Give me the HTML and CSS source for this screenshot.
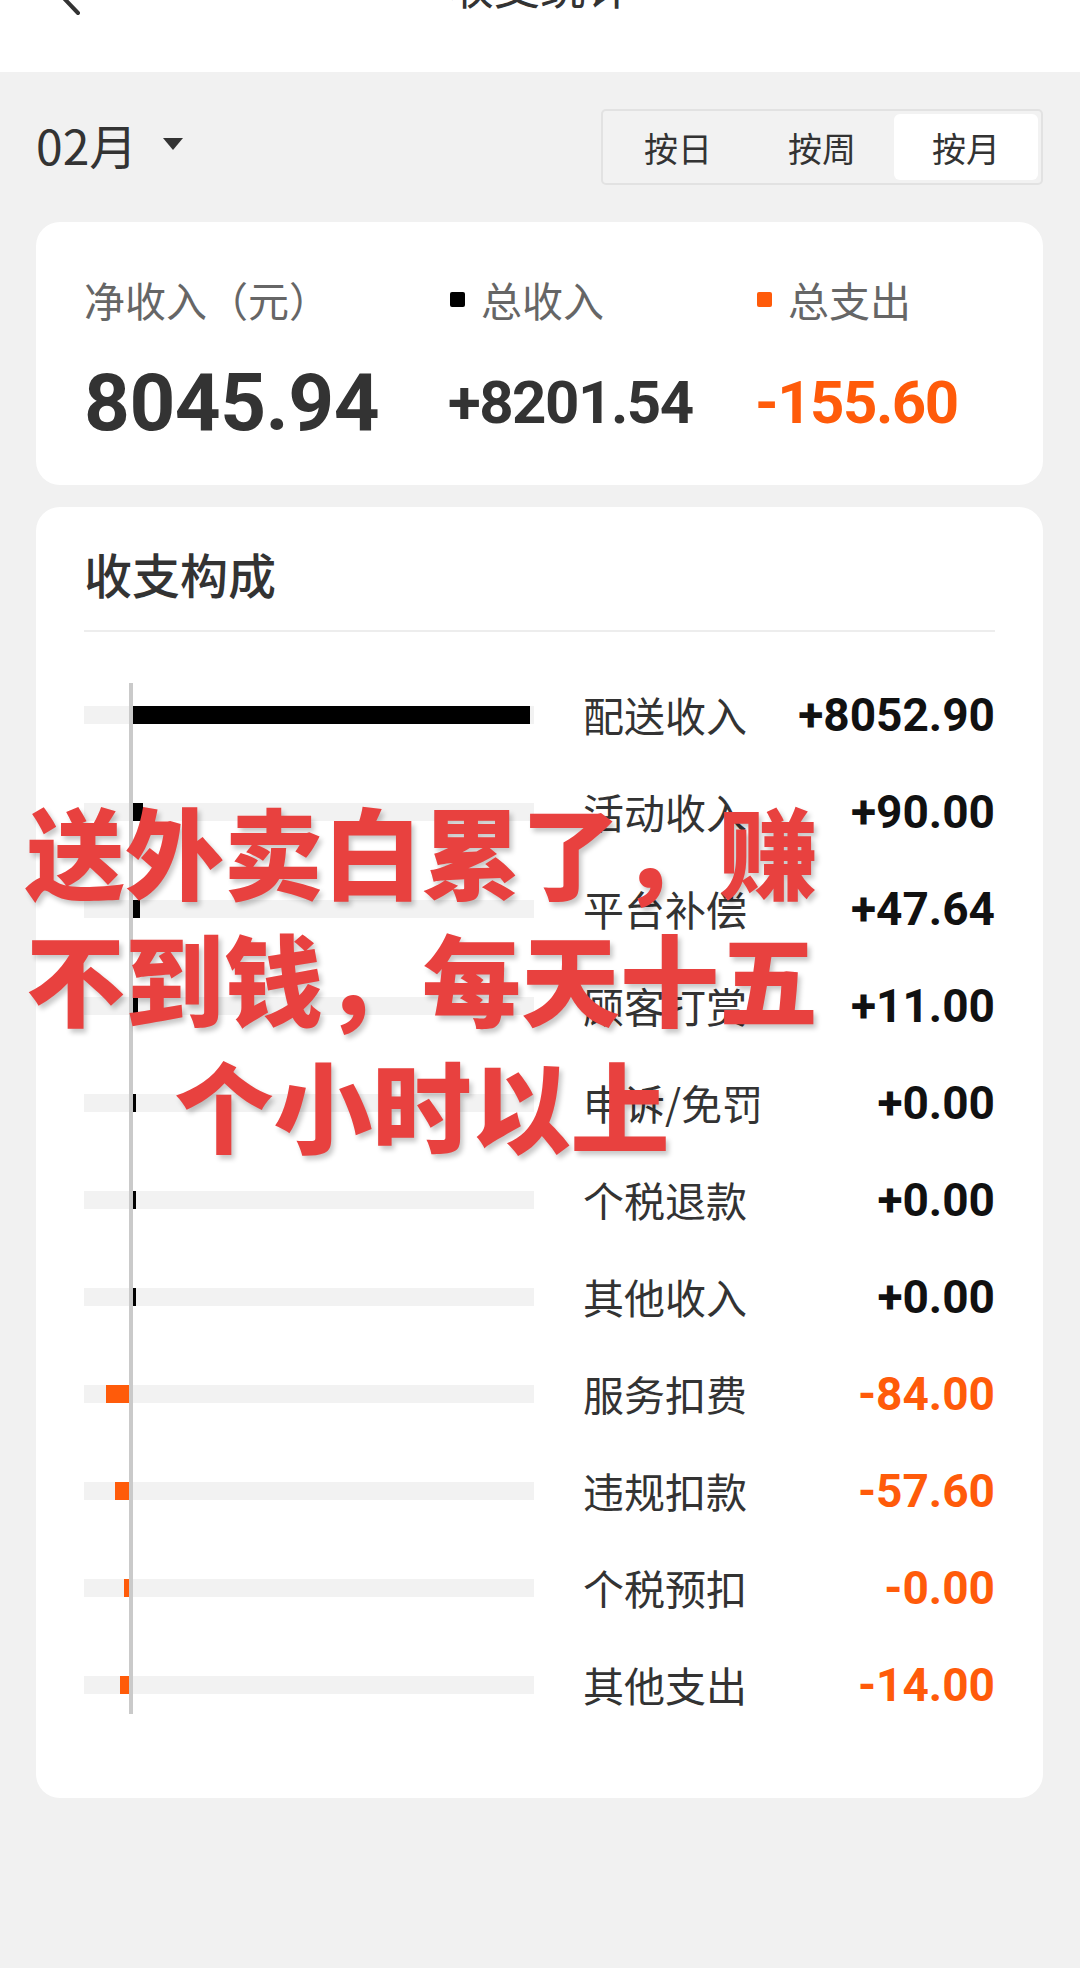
FILE: index.html
```html
<!DOCTYPE html>
<html lang="zh-CN">
<head>
  <meta charset="UTF-8">
  <title>收支统计</title>
  <meta name="viewport" content="width=device-width, initial-scale=1">
  <link rel="stylesheet" href="styles.css">
</head>
<body>
  <div class="page">
    <!-- Top bar (scrolled, title partly out of view) -->
    <header class="topbar">
      <svg class="back" width="120" height="72" viewBox="0 0 120 72">
        <polyline points="82,-34 57,-9 78,13" fill="none" stroke="#333" stroke-width="4" stroke-linecap="round" stroke-linejoin="round"/>
      </svg>
      <div class="topbar-title">收支统计</div>
      <span></span>
    </header>

    <!-- Month picker + period switch -->
    <div class="toolbar">
      <div class="month">02月<span class="caret"></span></div>
      <div class="seg">
        <div class="seg-item">按日</div>
        <div class="seg-item">按周</div>
        <div class="seg-item active">按月</div>
      </div>
    </div>

    <!-- Summary -->
    <section class="card summary">
      <div class="sum-label">净收入（元）</div>
      <div class="sum-label"><i class="dot"></i>总收入</div>
      <div class="sum-label"><i class="dot out"></i>总支出</div>
      <div class="sum-net">8045.94</div>
      <div class="sum-val">+8201.54</div>
      <div class="sum-val out">-155.60</div>
    </section>

    <!-- Breakdown -->
    <section class="card breakdown">
      <h2 class="card-title">收支构成</h2>
      <div class="divider"></div>
      <div class="chart">
        <div class="axis"></div>

        <div class="row">
          <div class="track"><div class="neg"></div><div class="pos"><span class="bar in" style="width:397px"></span></div></div>
          <div class="row-label">配送收入</div>
          <div class="row-value">+8052.90</div>
        </div>
        <div class="row">
          <div class="track"><div class="neg"></div><div class="pos"><span class="bar in" style="width:10px"></span></div></div>
          <div class="row-label">活动收入</div>
          <div class="row-value">+90.00</div>
        </div>
        <div class="row">
          <div class="track"><div class="neg"></div><div class="pos"><span class="bar in" style="width:7px"></span></div></div>
          <div class="row-label">平台补偿</div>
          <div class="row-value">+47.64</div>
        </div>
        <div class="row">
          <div class="track"><div class="neg"></div><div class="pos"><span class="bar in" style="width:5px"></span></div></div>
          <div class="row-label">顾客打赏</div>
          <div class="row-value">+11.00</div>
        </div>
        <div class="row">
          <div class="track"><div class="neg"></div><div class="pos"><span class="bar in" style="width:3px"></span></div></div>
          <div class="row-label">申诉/免罚</div>
          <div class="row-value">+0.00</div>
        </div>
        <div class="row">
          <div class="track"><div class="neg"></div><div class="pos"><span class="bar in" style="width:3px"></span></div></div>
          <div class="row-label">个税退款</div>
          <div class="row-value">+0.00</div>
        </div>
        <div class="row">
          <div class="track"><div class="neg"></div><div class="pos"><span class="bar in" style="width:3px"></span></div></div>
          <div class="row-label">其他收入</div>
          <div class="row-value">+0.00</div>
        </div>
        <div class="row">
          <div class="track"><div class="neg"><span class="bar out" style="width:23px"></span></div><div class="pos"></div></div>
          <div class="row-label">服务扣费</div>
          <div class="row-value out">-84.00</div>
        </div>
        <div class="row">
          <div class="track"><div class="neg"><span class="bar out" style="width:14px"></span></div><div class="pos"></div></div>
          <div class="row-label">违规扣款</div>
          <div class="row-value out">-57.60</div>
        </div>
        <div class="row">
          <div class="track"><div class="neg"><span class="bar out" style="width:5px"></span></div><div class="pos"></div></div>
          <div class="row-label">个税预扣</div>
          <div class="row-value out">-0.00</div>
        </div>
        <div class="row">
          <div class="track"><div class="neg"><span class="bar out" style="width:9px"></span></div><div class="pos"></div></div>
          <div class="row-label">其他支出</div>
          <div class="row-value out">-14.00</div>
        </div>
      </div>
    </section>

    <!-- Caption stamped over the screenshot -->
    <div class="stamp">送外卖白累了，赚<br>不到钱，每天十五<br>个小时以上</div>
  </div>
</body>
</html>
```

FILE: styles.css
```css
/* ====== Page ====== */
* { box-sizing: border-box; }
body {
  margin: 0;
  background: #f1f1f1;
  font-family: "Noto Sans CJK SC", "Noto Sans", sans-serif;
  color: #333;
}
.page {
  position: relative;
  width: 1080px;
  min-height: 1968px;
  background: #f1f1f1;
  overflow: hidden;
}

/* ====== Top bar ====== */
.topbar {
  display: grid;
  grid-template-columns: 120px 1fr 120px;
  height: 72px;
  background: #fff;
}
.back { display: block; overflow: visible; }
.topbar-title {
  margin-top: -39px;
  font-size: 46px;
  line-height: 46px;
  text-align: center;
  color: #333;
}

/* ====== Toolbar ====== */
.toolbar {
  display: flex;
  align-items: center;
  justify-content: space-between;
  padding: 37px 37px 37px 36px;
}
.month {
  display: flex;
  align-items: center;
  margin-top: -6px;
  font-size: 48px;
  line-height: 48px;
  color: #333;
}
.caret {
  width: 0;
  height: 0;
  margin-left: 26px;
  border-left: 10px solid transparent;
  border-right: 10px solid transparent;
  border-top: 12px solid #333;
}
.seg {
  display: flex;
  padding: 3px;
  border: 2px solid #e2e2e2;
  border-radius: 5px;
  background: #f2f2f2;
}
.seg-item {
  width: 144px;
  height: 66px;
  display: flex;
  align-items: center;
  justify-content: center;
  font-size: 34px;
  color: #333;
  border-radius: 6px;
}
.seg-item.active { background: #fff; }

/* ====== Cards ====== */
.card {
  margin: 0 37px 0 36px;
  background: #fff;
  border-radius: 24px;
}

/* Summary */
.summary {
  display: grid;
  grid-template-columns: 364px 307px 1fr;
  grid-template-rows: 41px 80px;
  row-gap: 43px;
  align-items: center;
  padding: 57px 0 42px 48px;
}
.sum-label {
  display: flex;
  align-items: center;
  font-size: 41px;
  line-height: 41px;
  color: #666;
}
.dot {
  width: 15px;
  height: 15px;
  margin: 0 16px 0 2px;
  border-radius: 2px;
  background: #000;
}
.dot.out { background: #ff5b0a; }
.sum-net {
  font-family: Roboto, "Liberation Sans", sans-serif;
  font-weight: 700;
  font-size: 80px;
  line-height: 80px;
  letter-spacing: -0.5px;
  color: #333;
}
.sum-val {
  font-family: Roboto, "Liberation Sans", sans-serif;
  font-weight: 700;
  font-size: 60px;
  line-height: 60px;
  letter-spacing: -1.5px;
  color: #333;
}
.sum-val.out { color: #ff5b0a; }

/* Breakdown */
.breakdown {
  margin-top: 22px;
  padding: 42px 48px 65px;
}
.card-title {
  margin: 0;
  font-size: 48px;
  line-height: 48px;
  font-weight: 500;
  color: #333;
}
.divider {
  height: 2px;
  margin-top: 33px;
  background: #ededed;
}
.chart {
  position: relative;
  margin-top: 34px;
}
.axis {
  position: absolute;
  top: 17px;
  bottom: 19px;
  left: 45px;
  width: 4px;
  background: #cacaca;
  z-index: 1;
}
.row {
  display: grid;
  grid-template-columns: 450px auto 1fr;
  column-gap: 49px;
  align-items: center;
  height: 97px;
}
.track {
  display: flex;
  height: 18px;
  background: #f2f2f2;
}
.track .neg {
  display: flex;
  justify-content: flex-end;
  width: 45px;
  margin-right: 4px;
}
.track .pos { flex: 1; display: flex; }
.bar { display: block; height: 18px; }
.bar.in { background: #000; }
.bar.out { background: #ff5b0a; }
.row-label {
  font-size: 41px;
  line-height: 41px;
  color: #333;
}
.row-value {
  justify-self: end;
  font-family: Roboto, "Liberation Sans", sans-serif;
  font-weight: 700;
  font-size: 46px;
  line-height: 46px;
  color: #111;
}
.row-value.out { color: #ff5b0a; }

/* ====== Overlay caption ====== */
.stamp {
  position: absolute;
  top: 786px;
  left: 22px;
  width: 800px;
  text-align: center;
  font-size: 99px;
  line-height: 127px;
  font-weight: 900;
  color: #e8413f;
  text-shadow: 3px 4px 5px rgba(0, 0, 0, 0.22);
  z-index: 2;
}
```
